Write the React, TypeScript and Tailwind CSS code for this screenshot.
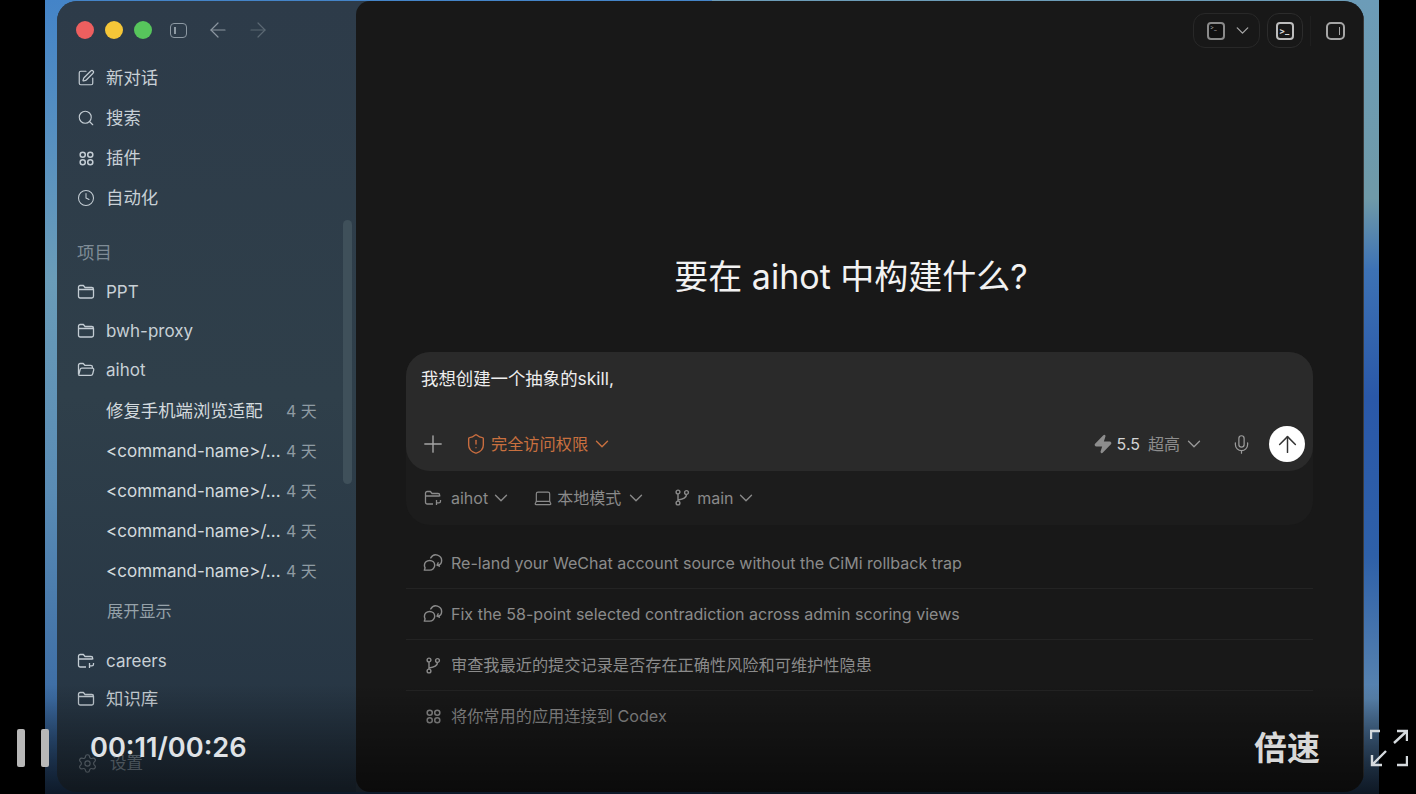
import { ArrowLeft, ArrowRight, ArrowUp, ChevronDown, Clock, Laptop, Mic, Plus, Search, Settings, ShieldAlert, SquarePen, Zap } from "lucide-react";
import type { ReactNode } from "react";

const font = { fontFamily: 'Inter, "Noto Sans CJK SC", sans-serif' };

function Dots({ size = 18 }: { size?: number }) {
  return (
    <svg width={size} height={size} viewBox="0 0 18 18" fill="none" stroke="currentColor" strokeWidth="1.6">
      <circle cx="5" cy="5" r="2.7" />
      <circle cx="13" cy="5" r="2.7" />
      <circle cx="5" cy="13" r="2.7" />
      <circle cx="13" cy="13" r="2.7" />
    </svg>
  );
}

function FolderIcon({ open }: { open?: boolean }) {
  return (
    <svg width="18" height="16" viewBox="0 0 18 16" fill="none" stroke="currentColor" strokeWidth="1.3" strokeLinejoin="round">
      {open ? (
        <path d="M1.5 12.5V3.2C1.500 2.200 2.200 1.500 3.200 1.500h3l1.600 1.800h6c1 0 1.600.7 1.600 1.600v1M1.700 13l1.500-5.600c.2-.8.8-1.200 1.600-1.200h10.600c.9 0 1.500.8 1.300 1.700l-1 4c-.2.9-.9 1.400-1.800 1.400H3.200c-.9 0-1.600-.4-1.500-.3z" />
      ) : (
        <path d="M1.500 4V3.200c0-1 .7-1.700 1.700-1.700h3.200l1.600 2h6.800c1 0 1.700.7 1.700 1.700v7.100c0 1-.7 1.700-1.700 1.700H3.200c-1 0-1.700-.7-1.700-1.700V4zm0 1.500h15" />
      )}
    </svg>
  );
}

function GitFolder() {
  return (
    <svg width="18" height="16" viewBox="0 0 18 16" fill="none" stroke="currentColor" strokeWidth="1.3" strokeLinejoin="round">
      <path d="M9 14H3.200c-1 0-1.700-.7-1.700-1.700V3.200c0-1 .7-1.700 1.700-1.700h3.200l1.600 2h6c1 0 1.700.7 1.700 1.700v1.300M1.500 6h14" />
      <path d="M12.500 10v5M16.500 10v1.200c0 1-.8 1.600-1.600 1.600h-2.400" />
    </svg>
  );
}

function Branch() {
  return (
    <svg width="16" height="17" viewBox="0 0 16 17" fill="none" stroke="currentColor" strokeWidth="1.4">
      <circle cx="4" cy="3" r="1.9" />
      <circle cx="4" cy="14" r="1.9" />
      <circle cx="12.500" cy="3.500" r="1.900" />
      <path d="M4 5v7M12.500 5.500c0 3.500-3 4.500-8.500 5.500" />
    </svg>
  );
}

function ChatLoop() {
  return (
    <svg width="21" height="18" viewBox="0 0 21 18" fill="none" stroke="currentColor" strokeWidth="1.5" strokeLinecap="round" strokeLinejoin="round">
      <path d="M7 6.300c3 0 5.300 2.200 5.300 5s-2.300 5.200-5.300 5.200H1.400l.8-2.400C1.700 13.200 1.500 12.300 1.500 11.300c0-2.800 2.500-5 5.500-5z" />
      <path d="M8.200 3.700A6 6 0 0 1 19.500 7c0 2.300-1.400 3.900-3.700 4.300M15.900 8.800l-1.200 2.500 2.500 1" />
    </svg>
  );
}

function Row({ icon, label, y, wide }: { icon: ReactNode; label: string; y: string; wide?: boolean }) {
  return (
    <div className={`flex items-center ${y} pl-[20px]`}>
      <span className="flex w-[18px] justify-center text-[#c3ccd3]">{icon}</span>
      <span className={`ml-[11px] leading-[24px] text-[#c8d0d6] ${wide ? "text-[17.4px]" : "text-[17px]"}`}>{label}</span>
    </div>
  );
}

function ThreadRow({ label, wide }: { label: string; wide?: boolean }) {
  return (
    <div className="flex h-[40px] items-center pl-[49px]">
      <span className={`w-[180px] shrink-0 leading-[24px] text-[#d3dade] ${wide ? "text-[17.4px]" : "text-[17px]"}`}>{label}</span>
      <span className="text-[16px] leading-[24px] text-[#8f9ba3]">4 天</span>
    </div>
  );
}

function Sidebar() {
  return (
    <aside className="relative flex h-full w-[299px] shrink-0 flex-col bg-gradient-to-b from-[#2d3b49] via-[#2f3f4a] to-[#253443]">
      <div className="flex h-[57px] shrink-0 items-center pl-[19px] pt-[1px]">
        <span className="h-[18px] w-[18px] rounded-full bg-[#ed5f5f]" />
        <span className="ml-[11px] h-[18px] w-[18px] rounded-full bg-[#f5c638]" />
        <span className="ml-[11px] h-[18px] w-[18px] rounded-full bg-[#57c55c]" />
        <span className="ml-[18px] flex h-[15px] w-[17px] items-center rounded-[4px] border-[1.5px] border-[#8d99a3] pl-[3px]">
          <span className="h-[7px] w-[1.5px] bg-[#8d99a3]" />
        </span>
        <ArrowLeft className="ml-[19px] text-[#8b96a0]" size={24} strokeWidth={1.2} />
        <ArrowRight className="ml-[16px] text-[#5b6873]" size={24} strokeWidth={1.2} />
      </div>

      <Row y="h-[40px]" wide label="新对话" icon={<SquarePen size={20} strokeWidth={1.6} />} />
      <Row y="h-[40px]" wide label="搜索" icon={<Search size={20} strokeWidth={1.5} />} />
      <Row y="h-[40px]" wide label="插件" icon={<Dots size={17} />} />
      <Row y="h-[40px]" wide label="自动化" icon={<Clock size={20} strokeWidth={1.4} />} />

      <div className="mt-[23px] h-[31px] pl-[20px] text-[17.4px] leading-[24px] text-[#7f8c96]">项目</div>

      <Row y="h-[39px]" label="PPT" icon={<FolderIcon />} />
      <Row y="h-[39px]" label="bwh-proxy" icon={<FolderIcon />} />
      <Row y="h-[39px]" label="aihot" icon={<FolderIcon open />} />

      <div className="mt-[2px] flex flex-col">
        <ThreadRow wide label="修复手机端浏览适配" />
        <ThreadRow label="<command-name>/..." />
        <ThreadRow label="<command-name>/..." />
        <ThreadRow label="<command-name>/..." />
        <ThreadRow label="<command-name>/..." />
      </div>
      <div className="flex h-[40px] items-center pl-[50px] text-[16.2px] text-[#96a2aa]">展开显示</div>

      <div className="mt-[10px]">
        <Row y="h-[39px]" label="careers" icon={<GitFolder />} />
        <Row y="h-[38px]" wide label="知识库" icon={<FolderIcon />} />
      </div>

      <div className="mt-[25px] flex h-[40px] items-center pl-[20px] text-[#7c8a96]">
        <Settings size={21} strokeWidth={1.3} />
        <span className="ml-[12px] text-[16.5px]">设置</span>
      </div>

      <div className="absolute right-[4px] top-[219px] h-[264px] w-[9px] rounded-full bg-[#3f505a]" />
    </aside>
  );
}

function TopBar() {
  return (
    <div className="flex h-[58px] shrink-0 items-center justify-end pr-[18px] pt-[1px]">
      <div className="flex h-[35px] w-[67px] items-center rounded-[12px] border border-[#282828] pl-[13px]">
        <span className="h-[18px] w-[18px] rounded-[4px] border-2 border-[#8a8a8a] bg-[#111111] pl-[1px] text-[6px] leading-[8px] text-[#a8a8a8]">&gt;_</span>
        <ChevronDown className="ml-[7px] text-[#a8a8a8]" size={21} strokeWidth={1.5} />
      </div>
      <div className="ml-[7px] flex h-[35px] w-[36px] items-center justify-center rounded-[12px] border border-[#2c2c2c]">
        <span className="flex h-[18px] w-[18px] items-center rounded-[4px] border-2 border-[#bdbdbd] pl-[1px] text-[9px] font-bold leading-none text-[#d4d4d4]">&gt;_</span>
      </div>
      <span className="ml-[7px] h-[30px] w-px bg-[#1f1f1f]" />
      <span className="ml-[15px] flex h-[18px] w-[19px] items-center justify-end rounded-[5px] border-2 border-[#a6a6a6] pr-[3px]">
        <span className="h-[8px] w-[1.5px] bg-[#a6a6a6]" />
      </span>
    </div>
  );
}

function Composer() {
  return (
    <div className="w-[907px] rounded-[24px] bg-[#1c1c1c]">
      <div className="flex h-[119px] flex-col justify-between rounded-[24px] bg-[#2a2a2a] pb-[9px] pl-[15px] pr-[8px] pt-[15px]">
        <div className="text-[17.4px] leading-[24px] text-[#eeeeee]">我想创建一个抽象的skill,</div>
        <div className="flex h-[36px] items-center">
          <Plus className="-ml-[2px] text-[#a5a5a5]" size={28} strokeWidth={1.2} />
          <ShieldAlert className="ml-[18px] text-[#c96d3f]" size={22} strokeWidth={1.5} />
          <span className="ml-[4px] text-[16.2px] text-[#c8703f]">完全访问权限</span>
          <ChevronDown className="ml-[3px] text-[#c8703f]" size={22} strokeWidth={1.5} />
          <div className="flex-1" />
          <Zap className="fill-[#8d8d8d] text-[#8d8d8d]" size={20} />
          <span className="ml-[4px] text-[16px] text-[#d4d4d4]">5.5</span>
          <span className="ml-[8px] text-[16px] text-[#8e8e8e]">超高</span>
          <ChevronDown className="ml-[3px] text-[#9a9a9a]" size={22} strokeWidth={1.4} />
          <Mic className="ml-[26px] text-[#9c9c9c]" size={21} strokeWidth={1.4} />
          <span className="ml-[17px] flex h-[36px] w-[36px] items-center justify-center rounded-full bg-white">
            <ArrowUp className="text-[#333333]" size={27} strokeWidth={1.3} />
          </span>
        </div>
      </div>
      <div className="flex h-[54px] items-center pb-[1px] pl-[18px] text-[16px] text-[#8a8a8a]">
        <GitFolder />
        <span className="ml-[9px]">aihot</span>
        <ChevronDown className="ml-[2px]" size={22} strokeWidth={1.5} />
        <Laptop className="ml-[21px]" size={20} strokeWidth={1.4} />
        <span className="ml-[4px]">本地模式</span>
        <ChevronDown className="ml-[4px]" size={22} strokeWidth={1.5} />
        <span className="ml-[27px]"><Branch /></span>
        <span className="ml-[7px]">main</span>
        <ChevronDown className="ml-[1px]" size={22} strokeWidth={1.5} />
      </div>
    </div>
  );
}

function Suggestion({ icon, text, last, cjk }: { icon: ReactNode; text: string; last?: boolean; cjk?: boolean }) {
  return (
    <div className={`flex h-[51px] items-center pl-[17px] text-[#8b8b8b] ${cjk ? "text-[16.2px]" : "text-[16.06px]"} ${last ? "" : "border-b border-[#232323]"}`}>
      <span className="flex w-[20px] justify-center text-[#8a8a8a]">{icon}</span>
      <span className="ml-[8px]">{text}</span>
    </div>
  );
}

function Main() {
  return (
    <main className="flex h-full flex-1 flex-col rounded-l-[14px] border-r border-[#3a3a3a] bg-[#181818]">
      <TopBar />
      <div className="mt-[196px] pr-[17px] text-center text-[34px] leading-[44px] text-[#f2f2f2]">要在 aihot 中构建什么?</div>
      <div className="mt-[53px] px-[50px]">
        <Composer />
        <div className="mt-[13px] w-[907px]">
          <Suggestion icon={<ChatLoop />} text="Re-land your WeChat account source without the CiMi rollback trap" />
          <Suggestion icon={<ChatLoop />} text="Fix the 58-point selected contradiction across admin scoring views" />
          <Suggestion cjk icon={<Branch />} text="审查我最近的提交记录是否存在正确性风险和可维护性隐患" />
          <Suggestion cjk icon={<Dots size={17} />} text="将你常用的应用连接到 Codex" last />
        </div>
      </div>
    </main>
  );
}

function VideoControls() {
  return (
    <>
      <div className="absolute inset-x-0 bottom-0 h-[110px] bg-gradient-to-b from-transparent to-black/55" />
      <div className="absolute inset-x-0 bottom-[27px] flex h-[38px] items-center text-[#dfe2e6]">
        <span className="ml-[17px] h-[38px] w-[8px] rounded-[2px] bg-[#b8b8b8]" />
        <span className="ml-[16px] h-[38px] w-[8px] rounded-[2px] bg-[#b8b8b8]" />
        <span className="ml-[41px] text-[27.2px] font-semibold leading-none">00:11/00:26</span>
        <div className="flex-1" />
        <span className="text-[33px] font-bold leading-none text-[#d8d8d8]">倍速</span>
        <svg className="ml-[50px] mr-[8px]" width="38" height="38" viewBox="0 0 38 38" fill="none" stroke="#d5dade" strokeWidth="2.4">
          <path d="M1 10V2h9M27 36h10v-9M24 14 37 2M27 2h10v10M2 36l14-14M2 26v10h10" />
        </svg>
      </div>
    </>
  );
}

export default function App() {
  return (
    <div className="relative h-[794px] w-[1416px] overflow-hidden bg-black" style={font}>
      <div className="relative ml-[45px] h-full w-[1334px] pb-[2px] pl-[12px] pr-[15px] pt-[1px]">
        <div className="absolute inset-y-0 left-0 w-1/2 bg-[linear-gradient(180deg,#4484c8_0%,#6a9cb8_35%,#5a8cb5_62%,#3d6da5_88%,#1f3a5c_100%)]" />
        <div className="absolute inset-y-0 right-0 w-1/2 bg-[linear-gradient(180deg,#6c9cb8_0%,#6f9aa8_25%,#3d72b5_34%,#2a58a8_50%,#2e60a8_70%,#5a85b0_88%,#1f3550_100%)]" />
        <div className="relative flex h-full overflow-hidden rounded-[20px] bg-[#2d3b49]">
          <Sidebar />
          <Main />
        </div>
      </div>
      <VideoControls />
    </div>
  );
}
